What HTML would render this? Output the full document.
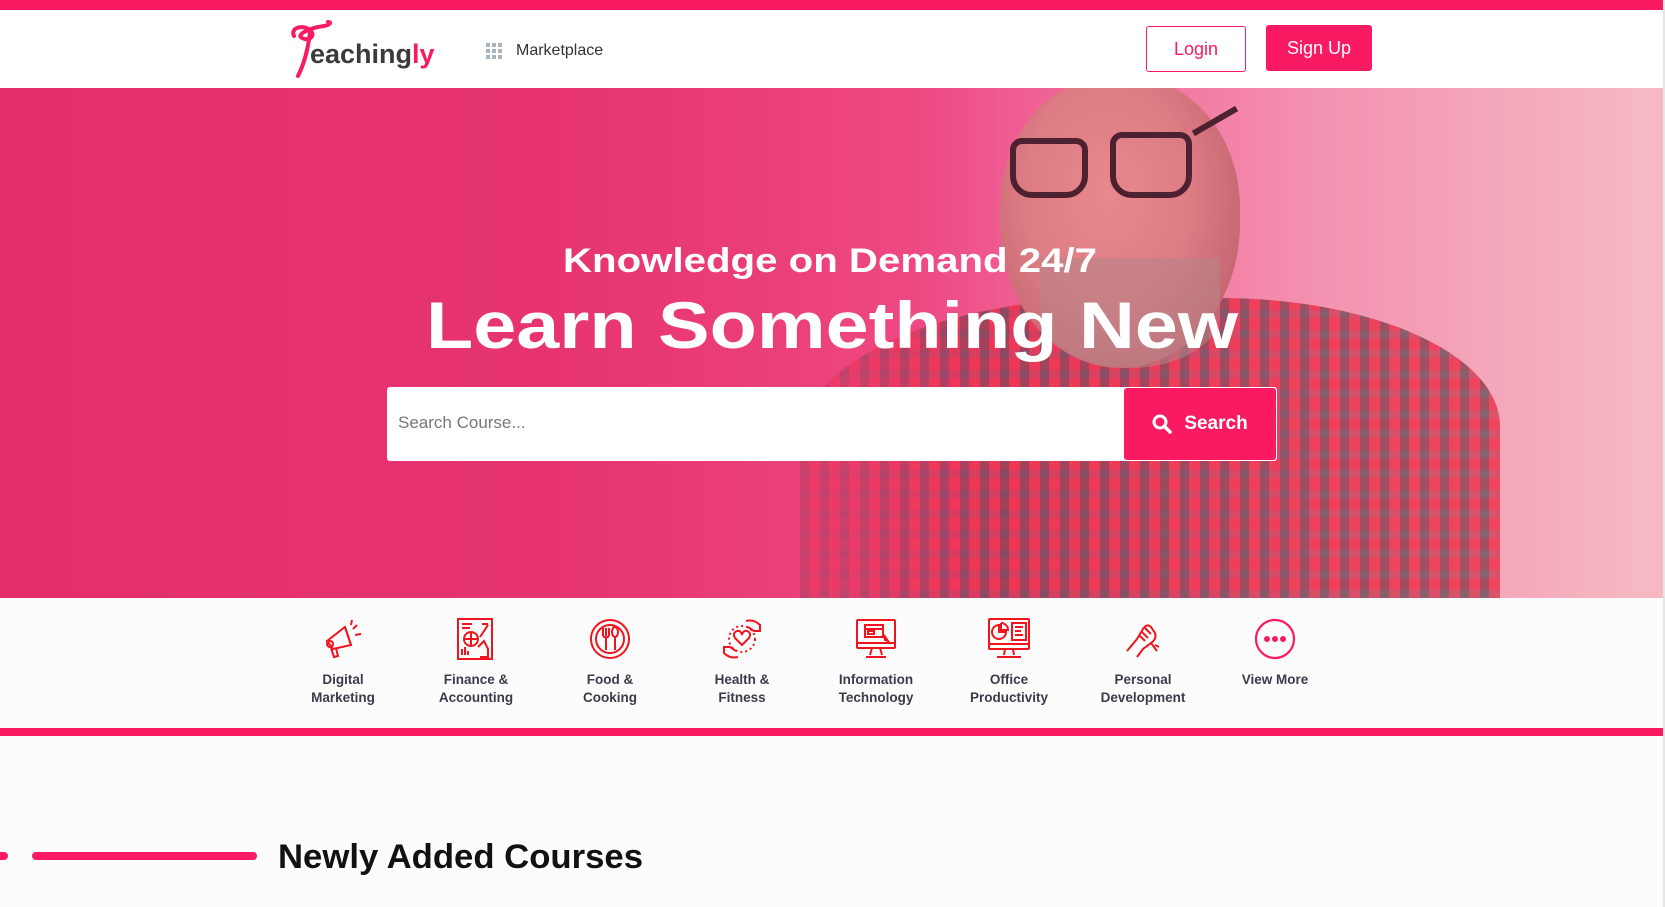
<!DOCTYPE html>
<html><head><meta charset="utf-8"><style>
*{margin:0;padding:0;box-sizing:border-box}
body{width:1665px;height:907px;overflow:hidden;background:#fcfcfc;font-family:"Liberation Sans",sans-serif;position:relative}
.abs{position:absolute}
.topbar{left:0;top:0;width:1663px;height:10px;background:#fa1a62}
.header{left:0;top:10px;width:1663px;height:78px;background:#fff}
.hero{left:0;top:88px;width:1663px;height:510px;overflow:hidden;
background:linear-gradient(90deg,#e1296a 0%,#e73572 30%,#ef4f8b 55%,#f5a8be 80%,#f8d6d4 100%)}
.scroll{left:1663px;top:0;width:2px;height:907px;background:#e6e6e6}
.btn{border-radius:3px;font-size:18px;display:flex;align-items:center;justify-content:center}
.cat{width:140px;text-align:center;font-size:13.5px;font-weight:bold;color:#3b3b4a;line-height:18px}
.cat svg{display:block;margin:0 auto 10px}
</style></head><body>
<div class="abs topbar"></div>
<div class="abs header"></div>
<svg class="abs" style="left:288px;top:20px" width="170" height="60" viewBox="0 0 170 60">
<path d="M6 16 C2 8 14 4 22 10 C28 15 22 22 14 18 C8 15 20 8 36 6 C42 5 44 2 40 2 M22 12 C20 30 16 44 10 56" fill="none" stroke="#fa1a62" stroke-width="4" stroke-linecap="round"/>
<text x="22" y="43" font-family="Liberation Sans" font-weight="bold" font-size="27" fill="#3a3a3a">eaching<tspan fill="#fa1a62">ly</tspan></text>
</svg>
<svg class="abs" style="left:486px;top:43px" width="16" height="16" viewBox="0 0 16 16" fill="#a9b3bf">
<rect x="0" y="0" width="4" height="4"/><rect x="6" y="0" width="4" height="4"/><rect x="12" y="0" width="4" height="4"/>
<rect x="0" y="6" width="4" height="4"/><rect x="6" y="6" width="4" height="4"/><rect x="12" y="6" width="4" height="4"/>
<rect x="0" y="12" width="4" height="4"/><rect x="6" y="12" width="4" height="4"/><rect x="12" y="12" width="4" height="4"/>
</svg>
<div class="abs" style="left:516px;top:42px;font-size:16px;color:#333">Marketplace</div>
<div class="abs btn" style="left:1146px;top:26px;width:100px;height:46px;border:1px solid #fa1a62;color:#fa1a62;background:#fff">Login</div>
<div class="abs btn" style="left:1266px;top:25px;width:106px;height:46px;background:#fa1a62;color:#fff">Sign Up</div>

<div class="abs hero">
 <!-- shirt -->
 <div class="abs" style="left:800px;top:210px;width:700px;height:320px;border-radius:45% 40% 0 0;background:repeating-linear-gradient(90deg,rgba(60,70,70,.55) 0 9px,rgba(235,40,60,.55) 9px 20px),repeating-linear-gradient(0deg,rgba(60,70,70,.35) 0 8px,rgba(240,50,70,.6) 8px 20px)"></div>
 <!-- head -->
 <div class="abs" style="left:1000px;top:-10px;width:240px;height:290px;border-radius:45% 45% 50% 50%;background:radial-gradient(ellipse at 45% 40%,#e89a90 0%,#d98a86 45%,#b86c6c 80%,rgba(180,110,110,0) 100%)"></div>
 <div class="abs" style="left:1040px;top:170px;width:180px;height:110px;border-radius:0 0 50% 50%;background:rgba(170,150,140,.55)"></div>
 <div class="abs" style="left:1010px;top:50px;width:78px;height:60px;border:6px solid #2a1c20;border-radius:12px 12px 22px 22px"></div>
 <div class="abs" style="left:1110px;top:44px;width:82px;height:66px;border:6px solid #2a1c20;border-radius:12px 12px 22px 22px"></div>
 <div class="abs" style="left:1190px;top:30px;width:50px;height:6px;background:#2a1c20;transform:rotate(-30deg)"></div>
 <!-- left fade -->
 <div class="abs" style="left:0;top:0;width:1000px;height:510px;background:linear-gradient(90deg,#e1296a 0%,#e6336f 55%,rgba(236,68,120,.55) 85%,rgba(236,68,120,0) 100%)"></div>
 <div class="abs" style="left:0;top:0;width:1663px;height:510px;background:rgba(240,60,120,.18)"></div>
</div>
<svg class="abs" style="left:0;top:88px" width="1663" height="400">
<text x="563" y="184" textLength="534" lengthAdjust="spacingAndGlyphs" font-family="Liberation Sans" font-weight="bold" font-size="34" fill="#fff">Knowledge on Demand 24/7</text>
<text x="426" y="260" textLength="812" lengthAdjust="spacingAndGlyphs" font-family="Liberation Sans" font-weight="bold" font-size="66" fill="#fff">Learn Something New</text>
</svg>
<div class="abs" style="left:387px;top:387px;width:890px;height:74px;background:#fff;border-radius:3px"></div>
<div class="abs" style="left:398px;top:413px;font-size:17px;color:#777">Search Course...</div>
<div class="abs btn" style="left:1124px;top:388px;width:152px;height:72px;background:#fa1a62;color:#fff;font-weight:bold;font-size:19px">
<svg width="20" height="20" viewBox="0 0 20 20" style="margin-right:12px"><circle cx="8" cy="8" r="6" fill="none" stroke="#fff" stroke-width="3"/><path d="M12.5 12.5 L18 18" stroke="#fff" stroke-width="3.5" stroke-linecap="round"/></svg>Search</div>

<div class="abs" style="left:0;top:598px;width:1663px;height:130px;background:#fdfcfc"></div>
<div class="abs cat" style="left:273px;top:617px">
<svg width="44" height="44" viewBox="0 0 44 44" fill="none" stroke="#f0141e" stroke-width="2"><path d="M6 24 L24 10 L30 28 L12 32 Z"/><path d="M24 10 L30 28"/><path d="M10 31 L13 40 L17 39 L15 31"/><path d="M32 12 L36 8 M34 18 L40 17 M30 8 L31 3"/><circle cx="9" cy="27" r="3"/></svg>Digital<br>Marketing</div>
<div class="abs cat" style="left:406px;top:617px">
<svg width="44" height="44" viewBox="0 0 44 44" fill="none" stroke="#f0141e" stroke-width="2"><rect x="4" y="2" width="34" height="40"/><path d="M8 7h10 M8 11h8 M28 7h6"/><circle cx="17" cy="22" r="7"/><path d="M17 15 V29 M10 22 H24"/><path d="M26 20 L34 8 M24 30 L30 24 L34 32 V40 H26"/><path d="M8 38 V32 M11 38 V30 M14 38 V34"/></svg>Finance &amp;<br>Accounting</div>
<div class="abs cat" style="left:540px;top:617px">
<svg width="44" height="44" viewBox="0 0 44 44" fill="none" stroke="#f0141e" stroke-width="2"><circle cx="22" cy="22" r="19"/><circle cx="22" cy="22" r="14"/><path d="M15 11 V19 M18 11 V19 M21 11 V19 M15 19 Q18 22 21 19 M18 21 V33"/><ellipse cx="27" cy="15" rx="3" ry="5"/><path d="M27 20 V33"/></svg>Food &amp;<br>Cooking</div>
<div class="abs cat" style="left:672px;top:617px">
<svg width="44" height="44" viewBox="0 0 44 44" fill="none" stroke="#f0141e" stroke-width="2"><path d="M22 28 L15 21 Q12 16 17 14 Q20 13 22 17 Q24 13 27 14 Q32 16 29 21 Z"/><path d="M26 4 Q34 2 40 8 V14 H34 L28 10"/><path d="M18 40 Q10 42 4 36 V30 H10 L16 34"/><circle cx="22" cy="22" r="13" stroke-dasharray="2 3"/></svg>Health &amp;<br>Fitness</div>
<div class="abs cat" style="left:806px;top:617px">
<svg width="44" height="44" viewBox="0 0 44 44" fill="none" stroke="#f0141e" stroke-width="2"><rect x="3" y="3" width="38" height="28" rx="1"/><path d="M3 26 H41 M18 31 L16 38 M26 31 L28 38 M12 40 H32"/><rect x="11" y="8" width="18" height="12"/><path d="M11 12 H29"/><rect x="14" y="14" width="6" height="3"/><path d="M30 18 L34 24 L31 23 Z"/></svg>Information<br>Technology</div>
<div class="abs cat" style="left:939px;top:617px">
<svg width="44" height="44" viewBox="0 0 44 44" fill="none" stroke="#f0141e" stroke-width="2"><rect x="2" y="2" width="40" height="30" rx="1"/><path d="M2 27 H42 M18 32 L17 38 M26 32 L27 38 M10 40 H34"/><path d="M12 8 A7 7 0 1 0 19 15 H12 Z"/><path d="M14 6 V13 H21 A7 7 0 0 0 14 6"/><rect x="25" y="6" width="14" height="17"/><path d="M28 10 H36 M28 14 H34 M28 18 H36"/></svg>Office<br>Productivity</div>
<div class="abs cat" style="left:1073px;top:617px">
<svg width="44" height="44" viewBox="0 0 44 44" fill="none" stroke="#f0141e" stroke-width="2"><path d="M6 34 L16 22 L22 12 Q26 6 30 10 L34 16 Q36 22 30 26 L22 32 L16 40"/><path d="M18 18 L24 24 M20 14 L27 21 M24 11 L30 17"/><path d="M30 26 L36 34 M34 28 L38 30"/></svg>Personal<br>Development</div>
<div class="abs cat" style="left:1205px;top:617px">
<svg width="44" height="44" viewBox="0 0 44 44"><circle cx="22" cy="22" r="19" fill="none" stroke="#fa1a62" stroke-width="2.2"/><circle cx="14" cy="22" r="3" fill="#fa1a62"/><circle cx="22" cy="22" r="3" fill="#fa1a62"/><circle cx="30" cy="22" r="3" fill="#fa1a62"/></svg>View More</div>

<div class="abs" style="left:0;top:728px;width:1663px;height:8px;background:#fa1a62"></div>
<div class="abs" style="left:-4px;top:852px;width:12px;height:8px;border-radius:4px;background:#fa1a62"></div>
<div class="abs" style="left:32px;top:852px;width:225px;height:8px;border-radius:4px;background:#fa1a62"></div>
<svg class="abs" style="left:270px;top:820px" width="420" height="60"><text x="8" y="48" textLength="365" lengthAdjust="spacingAndGlyphs" font-family="Liberation Sans" font-weight="bold" font-size="34" fill="#111">Newly Added Courses</text></svg>
<div class="abs scroll"></div>
</body></html>
